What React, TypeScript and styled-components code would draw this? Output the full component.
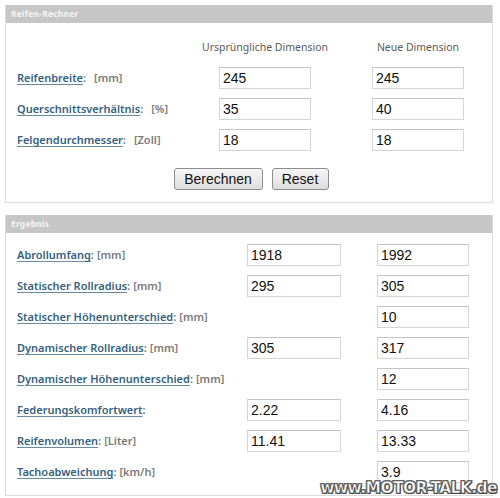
import React from "react";
import styled, { createGlobalStyle } from "styled-components";

const GlobalStyle = createGlobalStyle`
  html, body {
    margin: 0;
    padding: 0;
    background: #ffffff;
  }
  body {
    font-family: "Noto Sans", "DejaVu Sans", sans-serif;
  }
`;

const Page = styled.div`
  position: relative;
  width: 500px;
  height: 498px;
  padding: 5px 7px 0 5px;
  box-sizing: border-box;
  display: flex;
  flex-direction: column;
  gap: 12px;
  overflow: hidden;
`;

const Panel = styled.section<{ $height: number }>`
  height: ${(p) => p.$height}px;
  box-sizing: border-box;
  border: 1px solid #dcdcdc;
  border-top: none;
  display: flex;
  flex-direction: column;
`;

const PanelHeader = styled.div`
  height: 18px;
  background: #c6c6c6;
  color: #f4f4f4;
  font-size: 8.5px;
  font-weight: 700;
  line-height: 18px;
  padding-left: 5px;
  letter-spacing: 0.2px;
`;

const Grid = styled.div<{ $cols: string; $top: number }>`
  display: grid;
  grid-template-columns: ${(p) => p.$cols};
  grid-auto-rows: 31px;
  align-items: center;
  padding: ${(p) => p.$top}px 0 0 11px;
`;

const ColHead = styled.div`
  width: 92px;
  display: flex;
  justify-content: center;
  white-space: nowrap;
  font-size: 10.5px;
  color: #5a5a5a;
  height: 22px;
  line-height: 22px;
`;

const Label = styled.div`
  font-size: 11px;
  font-weight: 600;
  color: #6e7a82;
  white-space: nowrap;
`;

const LinkText = styled.a`
  color: #34617f;
  text-decoration: underline;
  text-decoration-color: #6a8aa0;
  text-underline-offset: 2px;
  cursor: pointer;
`;

const Unit = styled.span<{ $gap: number }>`
  margin-left: ${(p) => p.$gap}px;
  color: #7a7a7a;
`;

const Field = styled.input<{ $w: number }>`
  width: ${(p) => p.$w}px;
  height: 22px;
  box-sizing: border-box;
  border: 1px solid #d4d4d4;
  border-top-color: #c4c4c4;
  background: #fff;
  font-family: "Liberation Sans", Arial, sans-serif;
  font-size: 14px;
  color: #111;
  padding: 0 0 0 3px;
  outline: none;
`;

const Empty = styled.div``;

const Buttons = styled.div`
  display: flex;
  justify-content: center;
  gap: 9px;
  margin-top: 13px;
  padding-left: 4px;
`;

const Button = styled.button<{ $w: number }>`
  width: ${(p) => p.$w}px;
  height: 22px;
  border: 1px solid #8d8d8d;
  border-radius: 3px;
  background: linear-gradient(#f6f6f6, #dedede);
  font-family: "Liberation Sans", Arial, sans-serif;
  font-size: 14px;
  color: #111;
  padding: 0;
`;

const Watermark = styled.div`
  position: absolute;
  right: 3px;
  bottom: 1px;
  font-family: "DejaVu Sans", sans-serif;
  font-weight: 700;
  font-size: 15.5px;
  letter-spacing: -0.6px;
  color: #ffffff;
  -webkit-text-stroke: 0.6px #555;
  text-shadow: 1px 1px 0 #444, -1px 1px 0 #666, 1px -1px 0 #666, -1px -1px 0 #666;
`;

type Row = { name: string; unit?: string; a?: string; b: string };

const inputRows: Row[] = [
  { name: "Reifenbreite", unit: "[mm]", a: "245", b: "245" },
  { name: "Querschnittsverhältnis", unit: "[%]", a: "35", b: "40" },
  { name: "Felgendurchmesser", unit: "[Zoll]", a: "18", b: "18" },
];

const resultRows: Row[] = [
  { name: "Abrollumfang", unit: "[mm]", a: "1918", b: "1992" },
  { name: "Statischer Rollradius", unit: "[mm]", a: "295", b: "305" },
  { name: "Statischer Höhenunterschied", unit: "[mm]", b: "10" },
  { name: "Dynamischer Rollradius", unit: "[mm]", a: "305", b: "317" },
  { name: "Dynamischer Höhenunterschied", unit: "[mm]", b: "12" },
  { name: "Federungskomfortwert", a: "2.22", b: "4.16" },
  { name: "Reifenvolumen", unit: "[Liter]", a: "11.41", b: "13.33" },
  { name: "Tachoabweichung", unit: "[km/h]", b: "3.9" },
];

const RowLabel = ({ row, gap }: { row: Row; gap: number }) => (
  <Label>
    <LinkText>{row.name}</LinkText>:
    {row.unit && <Unit $gap={gap}>{row.unit}</Unit>}
  </Label>
);

export default function App() {
  return (
    <>
      <GlobalStyle />
      <Page>
        <Panel $height={198}>
          <PanelHeader>Reifen-Rechner</PanelHeader>
          <Grid $cols="202px 153px 92px" $top={8}>
            <Empty />
            <ColHead>Ursprüngliche Dimension</ColHead>
            <ColHead>Neue Dimension</ColHead>
            {inputRows.map((r) => (
              <React.Fragment key={r.name}>
                <RowLabel row={r} gap={8} />
                <Field $w={92} defaultValue={r.a} />
                <Field $w={92} defaultValue={r.b} />
              </React.Fragment>
            ))}
          </Grid>
          <Buttons>
            <Button $w={89}>Berechnen</Button>
            <Button $w={57}>Reset</Button>
          </Buttons>
        </Panel>
        <Panel $height={281}>
          <PanelHeader>Ergebnis</PanelHeader>
          <Grid $cols="230px 130px 92px" $top={6}>
            {resultRows.map((r) => (
              <React.Fragment key={r.name}>
                <RowLabel row={r} gap={3} />
                {r.a ? <Field $w={94} defaultValue={r.a} /> : <Empty />}
                <Field $w={92} defaultValue={r.b} />
              </React.Fragment>
            ))}
          </Grid>
        </Panel>
        <Watermark>www.MOTOR-TALK.de</Watermark>
      </Page>
    </>
  );
}
